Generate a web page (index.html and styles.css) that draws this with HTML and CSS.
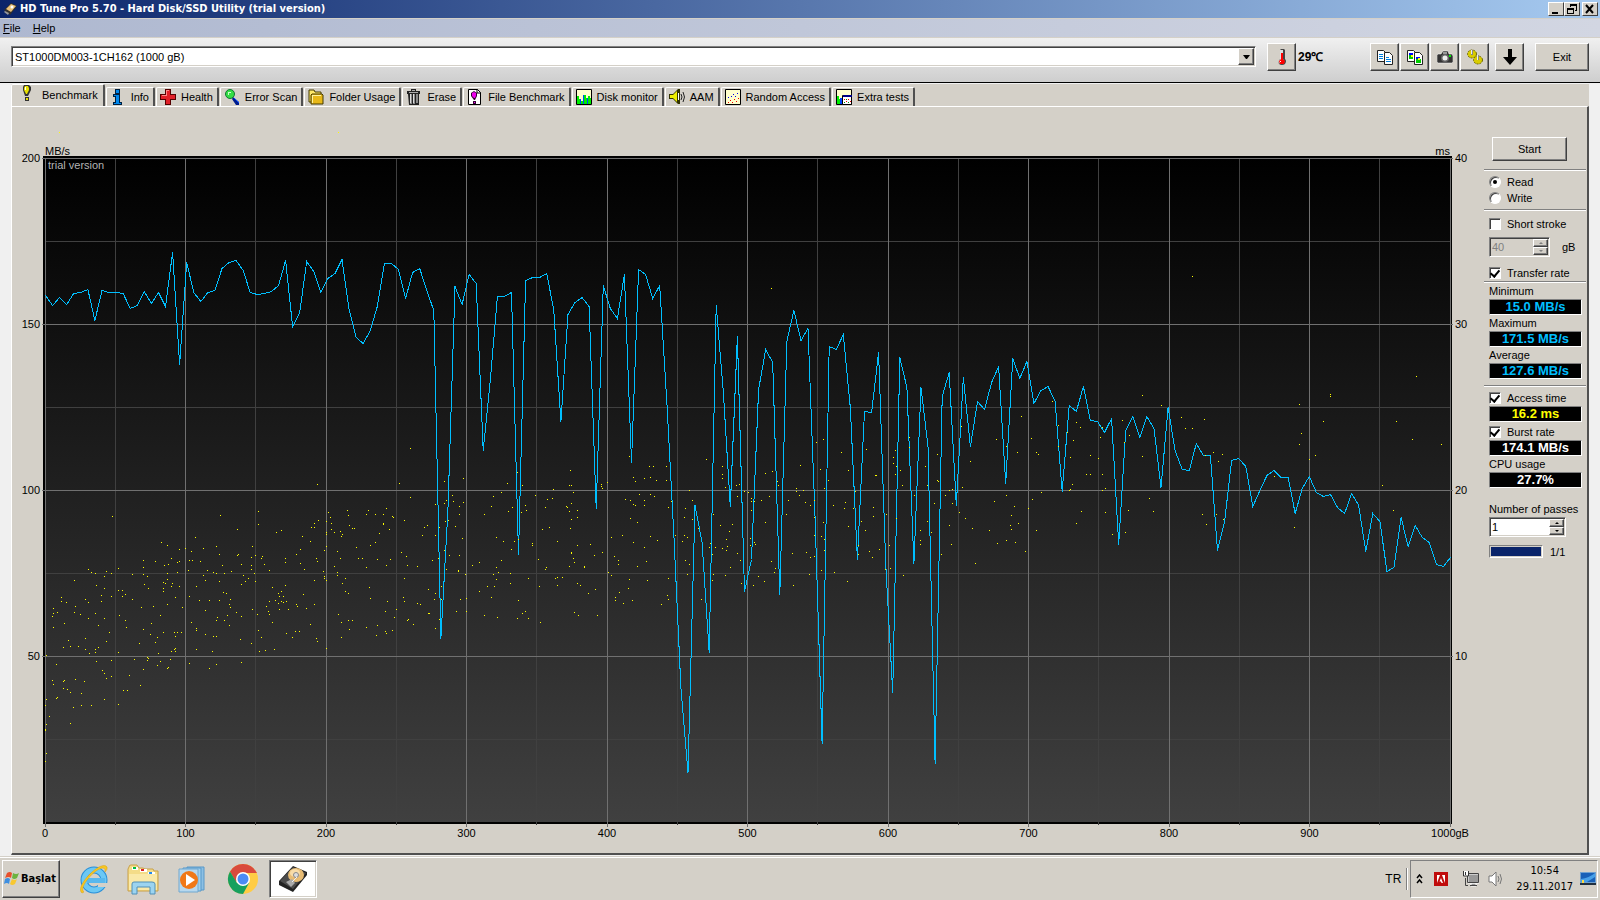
FILE: index.html
```
<!DOCTYPE html>
<html lang="en">
<head>
	<meta charset="UTF-8">
	<title>HD Tune Pro</title>
	<link rel="stylesheet" href="styles.css">
</head>
<body>
	<header class="titlebar">
		<svg class="icon" viewBox="0 0 16 16"><path d="M2 9 9 2l6 3-7 9z" fill="#33302c"/><path d="M4 8 9 3l5 2-5 6z" fill="#e8c078"/><circle cx="10" cy="6" r="1.5" fill="#fff"/><path d="m3 10 4 2-1 2-4-3z" fill="#999"/></svg>
		<h1 class="title">HD Tune Pro 5.70 - Hard Disk/SSD Utility (trial version)</h1>
		<button class="caption" aria-label="Minimize"><svg viewBox="0 0 12 10"><path d="M2 8h6v2H2z"/></svg></button>
		<button class="caption" aria-label="Restore"><svg viewBox="0 0 12 10"><path d="M4 0h7v7H9V6h1V2H5v1H4zM1 4h7v6H1zm1 2v3h5V6z" fill-rule="evenodd"/></svg></button>
		<button class="caption close" aria-label="Close"><svg viewBox="0 0 12 10"><path d="m2 1 7 8m0-8L2 9" stroke="#000" stroke-width="2"/></svg></button>
	</header>
	<nav class="menubar">
		<button><u>F</u>ile</button>
		<button><u>H</u>elp</button>
	</nav>

	<div class="toolbar">
		<div class="drive sunken">
			<select aria-label="Drive"><option>ST1000DM003-1CH162 (1000 gB)</option></select>
			<span class="arrow raised"><svg viewBox="0 0 7 4"><path d="M0 0h7L4 4H3z"/></svg></span>
		</div>
		<button class="tool raised" aria-label="Temperature"><svg viewBox="0 0 16 16"><path d="M7 0h3l1 1v9q2 2 0 5-3 2-6 0-1-3 1-5V1z" fill="#444"/><path d="M6 1h3v9q2 2 1 4-3 2-5 0-1-2 1-4z" fill="#ddd"/><path d="M7 4h2v6l2 2-1 3H6l-1-3 2-2z" fill="#f00"/><path d="M6 12h1v1H6z" fill="#fff"/></svg></button>
		<span class="temp">29℃</span>
		<button class="tool raised" aria-label="Copy text"><svg viewBox="0 0 16 16"><g stroke="#222" fill="#fff"><path d="M.5 1.5h6l2 2v9h-8z"/><path d="M7.5 3.5h5l3 3v9h-8z"/></g><path d="M2 5.5h4M2 7.5h4M2 9.500h4M9 8.500h3M9 10.500h5M9 12.500h5" stroke="#0080e0"/></svg></button>
		<button class="tool raised" aria-label="Copy screenshot"><svg viewBox="0 0 16 16"><g stroke="#222" fill="#fff"><path d="M.5 1.5h6l2 2v9h-8z"/><path d="M7.5 3.5h5l3 3v9h-8z"/></g><path d="M2 4h4v3H2zM9 8h4v2H9z" fill="#00f"/><path d="M2 6h4v4H2zM9 10h5v4H9z" fill="#0c0"/><path d="M4 6h2v2H4zM11 9h2v2h-2z" fill="#ff0"/></svg></button>
		<button class="tool raised" aria-label="Save screenshot"><svg viewBox="0 0 16 16"><path d="M1 5h3l2-3h5l1 3h3l1 2v6l-1 1H1l-1-1V6z" fill="#333" stroke="#fff" stroke-width=".5"/><path d="M6 3h4v2H6z" fill="#999"/><circle cx="8" cy="9" r="4" fill="#666"/><circle cx="8" cy="9" r="2.5" fill="#eee"/><path d="M12 6h2v2h-2z" fill="#0e0"/></svg></button>
		<button class="tool raised" aria-label="Options"><svg viewBox="0 0 16 16"><g fill="#d8cc00" stroke="#6b6500" stroke-dasharray="2 1"><ellipse cx="5" cy="5" rx="4.5" ry="4"/><ellipse cx="11" cy="11" rx="4.5" ry="4"/></g><path d="M4 1h2v5H4zM10 6h2v5h-2z" fill="#888"/><path d="M4 1h1v4H4zM10 6h1v5h-1z" fill="#eee"/></svg></button>
		<button class="tool raised down" aria-label="Hide to tray"><svg viewBox="0 0 16 16"><path d="M6 0h4v8h5l-7 8-7-8h5z"/></svg></button>
		<button class="exit raised">Exit</button>
	</div>

	<main class="content">
		<div class="tabs" role="tablist">
			<button class="tab active" role="tab"><svg viewBox="0 0 16 16"><path d="M5 0h5l2 2v3L9 11H6L4 5V2zM6 12h4v4H6z" fill="#333"/><path d="M6 1h3l1 2v2L8 9H7L5 5V3zM7 13h2v2H7z" fill="#e8e000"/><path d="M6 2h1v3H6z" fill="#fff"/></svg>Benchmark</button>
			<button class="tab" role="tab"><svg viewBox="0 0 16 16"><path d="M5 0h5v5H5zM3 5h7v8h2v3H3v-3h2V8H3z" fill="#002040"/><path d="M6 1h3v3H6zM4 6h5v8h2v1H4v-1h2V7H4z" fill="#08e"/></svg>Info</button>
			<button class="tab" role="tab"><svg viewBox="0 0 16 16"><path d="M5 0h6v5h5v6h-5v5H5v-5H0V5h5z" fill="#500"/><path d="M6 1h4v5h5v4h-5v5H6v-5H1V6h5z" fill="#e02028"/><path d="M6 1h3v1H7v5H2V6h4z" fill="#f88"/></svg>Health</button>
			<button class="tab" role="tab"><svg viewBox="0 0 16 16"><path d="m9 8 6 5v3h-3L8 10z" fill="#001c8c"/><path d="m10 9 5 5" stroke="#04f"/><circle cx="6" cy="5" r="4.5" fill="#3d4" stroke="#173"/><path d="M4 3h3v1H5v2H4z" fill="#cfc"/></svg>Error Scan</button>
			<button class="tab" role="tab"><svg viewBox="0 0 16 16"><path d="M1 1h5l1 2h6v10H1z" fill="#ffe868" stroke="#443a00"/><path d="M4 5h10l1 1v9H3V6z" fill="#e8b818" stroke="#443a00"/><path d="M4 6h9v1H5v7H4z" fill="#fff2a0"/></svg>Folder Usage</button>
			<button class="tab" role="tab"><svg viewBox="0 0 16 16"><path d="M5 0h5v2h4v3H1V2h4zM2 5h11v11H3z" fill="#222"/><path d="M3 3h9v1H3zM6 1h3v1H6z" fill="#aaa"/><path d="M4 5h2v10H4zM7 5h2v10H7zM10 5h2v9h-2z" fill="#888"/><path d="M4 5h1v9H4zM7 5h1v9H7z" fill="#ddd"/></svg>Erase</button>
			<button class="tab" role="tab"><svg viewBox="0 0 16 16"><path d="M1.5.5h9l3 3v12h-12z" fill="#fff" stroke="#000"/><path d="M10 0v4h4" fill="none" stroke="#000"/><path d="m7 2 3 2v3l-2 4H7L4 7V4zM6 12h3v3H6z" fill="#303"/><path d="m7 3 2 1v3l-1 2H7L5 7V4zM7 13h1v1H7z" fill="#e0e"/></svg>File Benchmark</button>
			<button class="tab" role="tab"><svg viewBox="0 0 16 16"><path d="M.5.5h15v15H.5z" fill="#ffc" stroke="#000"/><path d="M1 7h2v3h2v2h2V6h3v3h2V7h2v2h1v6H1z" fill="#0e0"/><path d="M4 10h1v5H4zM7 6h1v9H7zM11 9h1v6h-1z" fill="#04f"/></svg>Disk monitor</button>
			<button class="tab" role="tab"><svg viewBox="0 0 16 16"><path d="M0 5h4l5-5h2v15H9l-5-5H0z" fill="#333300"/><path d="M1 6h3l4-4v11L4 9H1z" fill="#ee0"/><path d="M9 4h1v7H9z" fill="#fff"/><path d="M12 5q2 3 0 6m2-8q3 5 0 10" fill="none" stroke="#222"/></svg>AAM</button>
			<button class="tab" role="tab"><svg viewBox="0 0 16 16"><path d="M.5.5h15v15H.5z" fill="#ffc" stroke="#000"/><path d="M3 13h1v1H3zM5 11h1v1H5zM7 13h1v1H7zM9 10h1v1H9zM11 12h1v1h-1zM13 9h1v1h-1z" fill="#e00"/><path d="M3 8h1v1H3zM6 7h1v1H6zM8 5h1v1H8zM10 7h1v1h-1zM12 4h1v1h-1z" fill="#00e"/></svg>Random Access</button>
			<button class="tab" role="tab"><svg viewBox="0 0 16 16"><path d="M.5.5h15v15H.5z" fill="#ffc" stroke="#000"/><path d="M1 7h2v3h2v5H1z" fill="#0e0"/><path d="M4 9h2v6H4z" fill="#04f"/><path d="M6.5 6.5h9v9h-9z" fill="#fff" stroke="#000"/><path d="M7 6h9v2H7z" fill="#008"/><path d="M8 10h1v1H8zM10 12h1v1h-1zM12 10h1v1h-1zM14 12h1v1h-1z" fill="#e00"/><path d="M8 13h1v1H8zM10 10h1v1h-1zM12 13h1v1h-1z" fill="#080"/></svg>Extra tests</button>
		</div>

		<section class="panel">
			<div class="units"><span>MB/s</span><span>ms</span></div>
			<div class="axis-y left"><span>200</span><span>150</span><span>100</span><span>50</span><span></span></div>
			<div class="chart">
				<svg id="graph" viewBox="-2 -2 1409 668" preserveAspectRatio="none" shape-rendering="crispEdges">
					<defs><linearGradient id="fade" x1="0" y1="0" x2="0" y2="1"><stop offset="0" stop-color="#000"/><stop offset="1" stop-color="#404040"/></linearGradient></defs>
					<rect x="-2" y="-2" width="1409" height="668"/>
					<rect x="0" y="0" width="1405" height="664" fill="url(#fade)"/>
					<g id="grid"></g>
					<polyline id="transfer"/>
					<g id="access"></g>
				</svg>
				<span class="trial">trial version</span>
			</div>
			<div class="axis-y right"><span>40</span><span>30</span><span>20</span><span>10</span><span></span></div>
			<div class="axis-x"><span>0</span><span>100</span><span>200</span><span>300</span><span>400</span><span>500</span><span>600</span><span>700</span><span>800</span><span>900</span><span>1000gB</span></div>

			<aside class="side">
				<button class="start raised">Start</button>
				<hr>
				<div class="modes">
					<label class="check"><input type="radio" name="mode" checked>Read</label>
					<label class="check"><input type="radio" name="mode">Write</label>
				</div>
				<hr>
				<div class="stroke">
					<label class="check"><input type="checkbox">Short stroke</label>
					<div class="unit-row">
						<span class="spin sunken off"><input type="number" value="40" aria-label="Short stroke size" disabled><span class="steps"><button class="raised" aria-label="More" disabled></button><button class="raised less" aria-label="Less" disabled></button></span></span>
						<span>gB</span>
					</div>
					<label class="check"><input type="checkbox" checked>Transfer rate</label>
				</div>
				<hr>
				<div class="readings">
					<p>Minimum</p><output>15.0 MB/s</output>
					<p>Maximum</p><output>171.5 MB/s</output>
					<p>Average</p><output>127.6 MB/s</output>
				</div>
				<hr>
				<div class="readings extra">
					<label class="check"><input type="checkbox" checked>Access time</label><output class="yellow">16.2 ms</output>
					<label class="check"><input type="checkbox" checked>Burst rate</label><output class="white">174.1 MB/s</output>
					<p>CPU usage</p><output class="white">27.7%</output>
				</div>
				<div class="passes">
					<label for="passes">Number of passes</label>
					<span class="spin sunken"><input type="number" id="passes" value="1"><span class="steps"><button class="raised" aria-label="More"></button><button class="raised less" aria-label="Less"></button></span></span>
					<div class="unit-row"><span class="progress"><i></i></span><span>1/1</span></div>
				</div>
			</aside>
		</section>
	</main>

	<footer class="taskbar">
		<button class="start-menu raised"><svg viewBox="0 0 16 16"><path d="M3 2q3-2 5 0L7 7Q5 5 1 7z" fill="#e8502c"/><path d="M9 2q3 2 6 0l-2 5q-3 2-5 0z" fill="#6cb33f"/><path d="M1 8q3-2 5 0l-1 5q-2-2-5 0z" fill="#3f8fe0"/><path d="M8 8q3 2 5 0l-2 5q-3 2-5 0z" fill="#f8c830"/></svg>Başlat</button>
		<div class="launch">
			<button aria-label="Internet Explorer"><svg viewBox="0 0 32 32"><circle cx="17" cy="17" r="10" fill="none" stroke="#2a8fd8" stroke-width="7"/><circle cx="17" cy="17" r="10" fill="none" stroke="#6cc8f4" stroke-width="5"/><path d="M10 15h18v5H10z" fill="#58b8ee"/><path d="M21 20h10v4H21z" fill="#d4d0c8"/><path d="M5 30C-3 24 24-4 30 4q1 2-2 5 1-4-2-4C18 5 1 25 7 29z" fill="#f8c820" stroke="#d89c10" stroke-width=".5"/></svg></button>
			<button aria-label="Explorer"><svg viewBox="0 0 32 32"><path d="M2 4q0-2 2-2h6l2 3h4l2 1h8l1 2h4v20H1V6z" fill="#f4dc88" stroke="#c8a048"/><path d="M5 4h6v3H5zM13 6h7v3h-7zM21 9h7v3h-7z" fill="#fff"/><path d="M6 4h3v2H6z" fill="#0b4"/><path d="M14 6h3v2h-3z" fill="#d22"/><path d="M22 9h3v2h-3z" fill="#28e"/><path d="M2 11h28v16H2z" fill="#fae9a8"/><path d="M5 31V21q0-2 2-2h18q3 0 3 2v10h-5v-7H10v7z" fill="#9cd4f0" stroke="#5090b8"/></svg></button>
			<button aria-label="Media Player"><svg viewBox="0 0 32 32"><path d="M10 4h17v23H10z" fill="#8cc0e4" stroke="#5898c8"/><path d="M6 5h18v23H6z" fill="#a0d0ee" stroke="#5898c8"/><path d="M2 6h19v23H2z" fill="#b8d8ee" stroke="#70a8d0"/><circle cx="12" cy="17" r="9" fill="#f07818"/><path d="m9 11 9 6-9 6z" fill="#fff"/></svg></button>
			<button aria-label="Chrome"><svg viewBox="0 0 32 32"><circle cx="16" cy="16" r="15" fill="#fc4"/><path d="M3 8.500A15 15 0 0 1 29 8.500L30 10H16l-7 9z" fill="#d94a3d"/><path d="M3 8.500A15 15 0 0 0 16 31l6-11-12 0z" fill="#17a05e"/><circle cx="16" cy="16" r="7" fill="#fff"/><circle cx="16" cy="16" r="5.5" fill="#4c8bf5"/></svg></button>
			<button class="running sunken" aria-label="HD Tune Pro"><svg viewBox="0 0 32 32"><path d="M2 18 16 3l14 6v3L16 29 2 22z" fill="#222"/><path d="M3 18 16 4l13 6-13 16z" fill="#4c4c4c"/><ellipse cx="19" cy="12" rx="8" ry="7" fill="#e8bc74"/><ellipse cx="18" cy="10" rx="5" ry="4" fill="#f8dca8"/><circle cx="19" cy="12" r="2.5" fill="#ddd" stroke="#888"/><path d="m9 19 6-3 3 4-4 4z" fill="#aaa"/><path d="m15 19 5-5" stroke="#eee"/></svg></button>
		</div>
		<span class="lang">TR</span>
		<div class="tray">
			<svg class="chevrons" viewBox="0 0 7 10"><path d="m1 4 2.500-3L6 4M1 9l2.500-3L6 9" fill="none" stroke="#000" stroke-width="1.5"/></svg>
			<svg class="adobe" viewBox="0 0 14 14"><path d="M0 0h14v14H0z" fill="#c00c0c"/><path d="M3 11V3h3zM11 11V3H8zM7 6l2 5H7.500L7 9.500H5.500z" fill="#fff"/></svg>
			<svg class="net" viewBox="0 0 16 16"><path d="M5 3h11v9H5zM8 12h5v3H8z" fill="#999" stroke="#fff"/><path d="M4.500 2.500h11v9h-11zM7 14.500h7M5 14.500H2.500V7" fill="none" stroke="#444"/><path d="M.5 0v5h5V0M2.500 1v3" fill="#fff" stroke="#333"/></svg>
			<svg class="speaker" viewBox="0 0 16 16"><path d="M1 5h3l4-4v14l-4-4H1z" fill="#fff" stroke="#777"/><path d="M10 5q2 3 0 6m2-8q3 5 0 10" fill="none" stroke="#777"/></svg>
			<div class="clock"><time>10:54</time><time>29.11.2017</time></div>
			<svg class="desktop" viewBox="0 0 16 13"><path d="M0 0h16v13H0z" fill="#6fa0d0"/><path d="M1 1h14v9H1z" fill="#1860b8"/><path d="M1 7q8-1 14-6v4L7 10H1z" fill="#48a0e8"/><path d="M0 11h16v2H0z" fill="#203040"/><path d="M2 8h2v3H2z" fill="#fd4"/></svg>
		</div>
	</footer>
	<script src="graph.js"></script>
</body>
</html>
```
FILE: styles.css
```
* {
	box-sizing: border-box;
}
body {
	display: flex;
	flex-direction: column;
	min-height: 100vh;
	margin: 0;
	background: #f0f0f0;
	color: #000;
	font-family: "Liberation Sans", Arial, sans-serif;
	font-size: 11px;
	line-height: 12px;
}
button, input, select {
	font: inherit;
	color: inherit;
	border: 0;
	padding: 0;
	margin: 0;
	background: none;
	border-radius: 0;
}
p {
	margin: 0;
}
.raised {
	background: #d4d0c8;
	border: 1px solid;
	border-color: #fff #404040 #404040 #fff;
	box-shadow: inset -1px -1px #808080;
}
.sunken {
	border: 1px solid;
	border-color: #808080 #fff #fff #808080;
	box-shadow: inset 1px 1px #404040, inset -1px -1px #d4d0c8;
}

/* title and menu */
.titlebar {
	display: flex;
	align-items: center;
	height: 18px;
	padding: 0 2px;
	background: linear-gradient(90deg, #0a246a, #a6caf0);
}
.titlebar .icon {
	width: 16px;
	height: 16px;
}
.title {
	flex: 1;
	margin: 0 0 0 2px;
	color: #fff;
	font: bold 11px/16px "DejaVu Sans Condensed", "Noto Sans", sans-serif;
}
.caption {
	width: 16px;
	height: 14px;
	background: #d4d0c8;
	border: 1px solid;
	border-color: #fff #404040 #404040 #fff;
}
.caption svg {
	display: block;
	width: 12px;
	height: 10px;
	margin: auto;
}
.caption.close {
	margin-left: 2px;
}
.menubar {
	display: flex;
	gap: 12px;
	height: 20px;
	padding: 0 3px;
	background: linear-gradient(90deg, #aeb8d0, #d2d6e2);
	border-top: 1px solid #d4d0c8;
	border-bottom: 1px solid #d4d0c8;
}

/* toolbar */
.toolbar {
	display: flex;
	align-items: flex-start;
	height: 45px;
	padding: 5px 11px 0;
	background: linear-gradient(#f0f0f0, #cecece);
	border-bottom: 1px solid #000;
}
.drive {
	position: relative;
	flex: 1;
	display: flex;
	height: 21px;
	margin: 3px 11px 0 0;
	padding: 2px;
	background: #fff;
}
.drive select {
	flex: 1;
	appearance: none;
	padding-left: 1px;
}
.drive .arrow {
	position: absolute;
	right: 1px;
	top: 1px;
	display: grid;
	place-items: center;
	width: 16px;
	height: 17px;
	pointer-events: none;
}
.arrow svg {
	width: 7px;
	height: 4px;
}
.tool {
	display: grid;
	place-items: center;
	width: 29px;
	height: 28px;
	margin-right: 1px;
}
.tool svg {
	width: 16px;
	height: 16px;
}
.temp {
	width: 73px;
	padding: 8px 0 0 1px;
	font-weight: bold;
	font-size: 12px;
}
.tool.down {
	margin: 0 11px 0 5px;
}
.exit {
	width: 54px;
	height: 28px;
}

/* tabs */
.content {
	flex: 1;
	display: flex;
	flex-direction: column;
	margin: 1px 11px;
	background: #d4d0c8;
}
.tabs {
	display: flex;
	align-items: flex-end;
	height: 22px;
}
.tab {
	display: flex;
	align-items: center;
	gap: 5px;
	height: 19px;
	margin-right: 1px;
	padding: 0 4px 0 3px;
	border-top: 1px solid #fff;
	border-left: 1px solid #fff;
	border-right: 2px solid #505050;
	border-radius: 2px 2px 0 0;
}
.tab svg {
	width: 16px;
	height: 16px;
}
.tab.active {
	gap: 7px;
	height: 22px;
	padding: 0 5px 0 7px;
	align-items: flex-start;
	line-height: 20px;
}

/* benchmark page */
.panel {
	flex: 1;
	display: grid;
	grid-template-columns: 31px 1fr 32px 102px;
	grid-template-rows: 49px 1fr 29px;
	padding-right: 1px;
	border: solid;
	border-width: 1px 2px 2px 1px;
	border-color: #fff #505050 #505050 #fff;
}
.units {
	grid-area: 1 / 2;
	display: flex;
	justify-content: space-between;
	align-items: flex-end;
	padding: 0 2px;
	line-height: 10px;
}
.chart {
	grid-area: 2 / 2;
	position: relative;
}
.chart svg {
	position: absolute;
	width: 100%;
	height: 100%;
	overflow: visible;
}
.trial {
	position: absolute;
	left: 5px;
	top: 3px;
	color: #b4b4b4;
}
.axis-y {
	display: flex;
	flex-direction: column;
	justify-content: space-between;
	margin: 2px 3px;
}
.axis-y span {
	display: flex;
	align-items: center;
	height: 0;
}
.axis-y.left {
	grid-area: 2 / 1;
	align-items: flex-end;
}
.axis-y.right {
	grid-area: 2 / 3;
}
.axis-x {
	grid-area: 3 / 2;
	display: flex;
	justify-content: space-between;
	margin: 3px 2px 0;
}
.axis-x span {
	display: flex;
	justify-content: center;
	width: 0;
}
.minor {
	stroke: #404040;
}
.major {
	stroke: #707070;
}
#transfer {
	fill: none;
	stroke: #00bfff;
}
#access {
	fill: #ff0;
}

/* right column */
.side {
	grid-area: 1 / 4 / 4 / 5;
	padding-top: 30px;
}
.side hr {
	height: 2px;
	margin: 0;
	border: 0;
	border-top: 1px solid #808080;
	border-bottom: 1px solid #fff;
}
.start {
	display: block;
	width: 75px;
	height: 24px;
	margin: 0 auto 8px 8px;
}
.check {
	display: flex;
	align-items: center;
	gap: 6px;
	height: 16px;
}
.check input {
	appearance: none;
	display: grid;
	place-items: center;
	width: 12px;
	height: 12px;
	background: #fff;
	border: 1px solid;
	border-color: #808080 #fff #fff #808080;
	box-shadow: inset 1px 1px #404040;
}
.check input[type=radio] {
	border-radius: 50%;
}
.check input[type=radio]:checked::after {
	content: "";
	width: 4px;
	height: 4px;
	border-radius: 50%;
	background: #000;
}
.check input[type=checkbox]:checked::after {
	content: "";
	width: 4px;
	height: 7px;
	margin-bottom: 2px;
	border: solid #000;
	border-width: 0 2px 2px 0;
	transform: rotate(40deg);
}
.modes {
	padding: 3px 5px;
}
.stroke {
	padding: 5px 5px 0;
}
.unit-row {
	display: flex;
	align-items: center;
	gap: 12px;
}
.stroke .unit-row {
	margin: 5px 0 8px;
}
.spin {
	display: flex;
	width: 61px;
	height: 20px;
	padding: 1px;
	background: #fff;
}
.spin input {
	flex: 1;
	width: 0;
	padding-left: 1px;
	appearance: textfield;
}
.spin input::-webkit-inner-spin-button {
	display: none;
}
.spin.off {
	background: #d4d0c8;
	color: #808080;
}
.steps {
	display: flex;
	flex-direction: column;
	width: 15px;
}
.steps button {
	flex: 1;
	display: grid;
	place-items: center;
}
.steps button::after {
	content: "";
	border: 2px solid transparent;
	border-top: 0;
	border-bottom: 2px solid #000;
}
.steps .less::after {
	border-top: 2px solid #000;
	border-bottom: 0;
}
.off .steps button::after {
	border-bottom-color: #808080;
	border-top-color: #808080;
}
.readings {
	padding: 2px 5px 4px;
}
.readings p {
	padding-bottom: 2px;
}
output {
	display: block;
	width: 93px;
	height: 16px;
	margin-bottom: 2px;
	background: #000;
	border: 1px solid;
	border-color: #808080 #fff #fff #808080;
	color: #00bfff;
	font-weight: bold;
	font-size: 13px;
	line-height: 14px;
	text-align: center;
}
.readings.extra {
	padding: 3px 5px 6px;
}
.yellow {
	color: #ff0;
}
.white {
	color: #fff;
}
.passes {
	display: flex;
	flex-direction: column;
	gap: 2px;
	padding: 7px 5px;
}
.passes .spin {
	width: 77px;
}
.passes .unit-row {
	gap: 7px;
	margin-top: 6px;
}
.progress {
	width: 54px;
	height: 13px;
	padding: 1px;
	border: 1px solid;
	border-color: #808080 #fff #fff #808080;
}
.progress i {
	display: block;
	height: 100%;
	background: #0a246a;
}

/* taskbar */
.taskbar {
	display: flex;
	align-items: center;
	height: 44px;
	padding: 0 2px;
	background: #d4d0c8;
	border-top: 1px solid #d4d0c8;
	box-shadow: inset 0 1px #fff;
}
.start-menu {
	display: flex;
	align-items: center;
	gap: 1px;
	width: 58px;
	height: 38px;
	padding-left: 1px;
	font: bold 11px/14px "DejaVu Sans Condensed", "Noto Sans", sans-serif;
}
.start-menu svg {
	width: 16px;
	height: 16px;
}
.launch {
	flex: 1;
	display: flex;
	align-items: center;
	gap: 2px;
	margin-left: 9px;
}
.launch button {
	display: grid;
	place-items: center;
	width: 48px;
	height: 38px;
}
.launch svg {
	width: 32px;
	height: 32px;
}
.launch .running {
	background: #fff;
}
.lang {
	margin-right: 3px;
	padding: 5px 5px 5px 0;
	border-right: 1px solid #808080;
	box-shadow: 1px 0 #fff;
	font-size: 12px;
}
.tray {
	display: flex;
	align-items: center;
	height: 38px;
	padding: 0 1px 0 5px;
	border: 1px solid;
	border-color: #808080 #fff #fff #808080;
	font: 11px/16px "DejaVu Sans Condensed", "Noto Sans", sans-serif;
}
.chevrons {
	width: 7px;
	height: 10px;
	margin-right: 11px;
}
.adobe {
	width: 14px;
	height: 14px;
	margin-right: 15px;
}
.net, .speaker {
	width: 16px;
	height: 16px;
	margin-right: 9px;
}
.clock {
	display: flex;
	flex-direction: column;
	align-items: center;
	margin: 0 7px 0 3px;
}
.desktop {
	width: 16px;
	height: 13px;
}
```
FILE: graph.js
```
const SVG = "http://www.w3.org/2000/svg";
const W = 1405;
const H = 664;

function add(parent, name, attrs) {
	const el = document.createElementNS(SVG, name);
	for (const key in attrs) el.setAttribute(key, attrs[key]);
	parent.appendChild(el);
}

// grid: minor lines first so the major ones stay on top
const grid = document.getElementById("grid");
const crop = n => Math.floor(n) + 0.5;
for (const odd of [1, 0]) {
	const cls = odd ? "minor" : "major";
	for (let i = odd; i <= 20; i += 2) {
		const x = crop(i * W / 20);
		add(grid, "line", { x1: x, x2: x, y1: 0, y2: odd ? 667 : 669, class: cls });
	}
	for (let i = odd; i < 8; i += 2) {
		const y = crop(i * H / 8);
		add(grid, "line", { x1: odd ? 0 : -3, x2: odd ? W : W + 3, y1: y, y2: y, class: cls });
	}
}

// transfer rate, distance from the 200 MB/s line
const transfer = [
	137,147,139,146,135,134,131,162,132,134,134,135,150,147,133,145,134,148,94,206,
	104,134,143,134,132,110,104,102,112,134,136,135,133,127,102,168,154,103,113,134,
	120,115,101,151,179,185,172,148,105,105,111,140,114,110,132,152,480,352,128,146,
	116,125,292,222,138,138,134,396,122,119,119,115,152,263,156,144,139,148,350,127,
	150,160,116,304,111,116,140,127,243,377,529,614,347,384,494,147,233,348,178,433,
	401,231,191,204,436,183,152,182,170,360,585,188,191,176,250,401,253,254,194,405,
	534,199,229,405,229,288,605,238,214,347,219,288,243,251,224,208,325,200,220,203,
	245,232,228,243,333,247,253,228,262,263,274,260,386,272,258,279,258,270,329,249,
	292,311,312,285,297,297,392,363,302,300,308,348,332,317,312,319,319,355,330,318,
	334,338,336,349,355,335,347,393,355,363,413,409,359,388,367,379,384,406,408,399
];
document.getElementById("transfer").setAttribute("points",
	transfer.map((y, i) => (i * W / 199 + 0.5).toFixed(1) + "," + (y + 0.5)).join(" "));

// access time samples, in blocks: origin, scale, then x,y pairs
const blocks = [
	{ x: -5, y: 72, kx: 3, ky: 3, at: [
		1111,655,832,763,1078,760,1213,754,1270,745,1111,802,1237,796,1240,814,1219,811,1214,820,1186,823,1258,829,1270,817,1360,799,1354,829,1333,853,
		217,859,541,856,655,844,655,883,592,898,709,907,724,901,466,922,364,937,382,946,418,958,436,955,454,964,490,955,529,949,538,973,592,976,637,949,
		634,982,646,976,667,979,664,985,673,1003,736,985,736,997,769,973,781,958,781,1000,787,919,811,934,814,892,823,880,823,892,835,871,859,874,865,847,
		871,862,874,880,874,898,883,907,859,907,859,913,859,949,853,961,901,904,907,913,904,919,922,841,925,856,928,886,937,895,943,895,949,952,979,853,
		985,841,1006,853,1030,853,1039,835,1057,859,1060,862,1030,880,1030,883,1018,910,1048,898,1006,937,991,946,1093,871,1162,886,1153,892,1147,916,1186,916,1198,892,
		1216,874,1225,871,1246,889,1267,925,1258,853,1258,976,1228,976,1213,961,1369,922,1318,997,1297,1006,1276,1033,1255,1021,1255,1024,1219,1018,1195,985,1177,991,
		829,985,832,994,793,1018,850,1024,853,1039,853,1045,859,1051,823,1051,892,964,901,985,883,1009,892,1027,892,1036,955,985,967,985,979,1012,1012,988,1051,988,1039,1006,
		1084,967,1099,979,1102,1006,1132,1009,1093,1045,907,1060,916,1045,916,1084,925,1090,988,1072,991,1105,1042,1114,1036,1144,1069,1138,1063,1162,1090,1102,1093,1114,
		1132,1120,1141,1123,1165,1078,1186,1090,1183,1108,1204,1069,1204,1108,1261,1108,1279,1105,1279,1144,1249,1144,1318,1084,1342,1069,1363,1069,1354,1102,1369,1012,1375,1027,
		1360,1033,1369,1048,1372,1162,1333,1156,1198,1168,1186,1195,1168,1150,1165,1150,1105,1168,1102,1171,1120,1183,1057,1201,1039,1210,1036,1204,1012,1186,1009,1216,979,1192,
		928,1198,937,1171,925,1171,904,1177,895,1153,904,1222,859,1255,829,1225,832,1234,811,1183,823,1123,799,1135,790,1093,769,1123,772,1129,736,1066,724,1084,730,1099,
		715,1090,718,1099,706,1111,724,1114,730,1117,739,1114,715,1120,718,1138,745,1138,697,1072,688,1114,679,1129,685,1144,688,1153,697,1177,652,1153,637,1138,655,1201,
		664,1222,634,1240,658,1264,676,1261,703,1258,739,1210,757,1222,766,1204,778,1204,688,1021,643,1030,646,1054,634,1006,634,1018,625,1045,616,1054,610,1036,604,1003,
		595,973,604,1063,574,1024,547,1006,553,1030,529,1030,520,1027,538,1054,502,1021,481,994,457,991,448,991,445,1021,490,1036,496,1051,469,1069,448,1099,478,1111,
		508,1111,538,1111,550,1087,559,1090,571,1108,568,1123,571,1132,589,1147,604,1159,562,1156,553,1171,532,1162,529,1171,568,1186,601,1228,529,1219,520,1219,496,1213,
		496,1141,454,1177,469,1195,469,1201,469,1258,517,1264,412,997,418,994,394,985,385,1003,373,1006,346,994,310,991,310,1012,310,1033,322,1039,313,1063,325,1075,
		382,1030,412,1027,382,1048,376,1060,370,1057,370,1075,370,1084,397,1060,394,1069,418,1069,406,1102,382,1123,427,1132,340,1129,304,1132,361,1156,334,1180,310,1198,
		370,1207,352,1222,331,1213,346,1237,403,1207,412,1207,424,1207,406,1219,406,1255,403,1258,406,1264,394,1264,355,1270,298,1240,235,1267,145,1018,154,1027,166,1030,
		199,1024,214,1030,235,1015,193,1039,277,1033,103,1051,169,1066,193,1075,235,1081,247,1081,256,1093,247,1099,277,1108,214,1099,184,1096,184,1114,136,1108,145,1117,
		64,1102,64,1114,79,1117,106,1129,103,1147,121,1153,145,1165,166,1150,193,1165,238,1156,256,1171,259,1192,208,1207,175,1186,199,1234,175,1252,166,1258,166,1267,
		148,1270,136,1258,136,1225,115,1249,91,1249,85,1231,70,1252,73,1180,40,1135,40,1150,37,1159,52,1147,40,1192,18,1276,283,1288,322,1282,325,1285,391,1288
	] },
	{ x: -5, y: 492, kx: 3, ky: 3, at: [
		214,31,169,34,187,61,193,70,199,85,214,79,268,76,301,106,250,121,262,121,235,163,193,148,154,166,124,166,124,130,100,172,91,127,82,118,70,115,70,94,73,91,
		106,88,133,94,49,43,37,91,40,103,52,142,49,145,18,148,16,166,28,199,18,223,16,238,16,241,91,220,18,310,16,334,310,58,322,31,352,46,361,34,382,55,385,52,
		448,40,508,55,529,43,604,37
	] },
	{ x: 435, y: 92, kx: 3, ky: 2.904, at: [
		874,111,679,608,448,599,508,628,520,628,559,628,559,669,529,669,511,660,493,663,460,660,466,672,382,675,367,692,364,680,364,686,271,640,268,683,274,683,280,704,
		220,695,217,721,202,724,166,712,127,683,112,646,82,678,64,704,40,715,34,744,13,768,97,747,85,759,136,741,139,756,124,762,196,747,259,744,262,747,274,736,268,759,
		292,756,292,776,274,782,271,808,208,805,187,811,232,846,157,852,157,857,103,846,70,846,49,834,94,869,115,840,64,901,49,921,55,936,40,942,49,956,22,977,43,977,
		34,1009,13,1061,52,1067,91,939,91,968,115,1017,145,953,178,977,175,898,199,921,196,927,226,953,232,951,247,951,232,974,268,918,283,907,274,878,274,881,280,895,
		292,857,331,855,343,887,367,878,313,918,313,921,292,968,301,974,325,997,346,985,283,1052,295,1061,352,1061,127,1055,136,1049,112,1070,145,1070,181,1081,
		394,834,427,828,403,889,415,901,415,913,385,936,394,945,448,956,445,982,418,994,406,1009,406,1017,430,1026,457,1017,502,959,499,904,472,918,460,849,493,863,
		511,831,532,843,472,791,451,779,460,738,466,741,451,727,436,724,493,727,493,741,478,709,511,709,523,715,565,747,574,730,586,828,613,828,622,834,607,846,613,776,
		616,750,637,727,628,698,637,782,655,808,616,901,628,913,622,942,565,953,562,1003,565,1014,544,1029,664,1014,688,863,691,852,706,863,697,884,700,942,697,959,
		700,768,721,799,757,797,748,817,739,840,742,860,739,872,727,866,772,881,781,901,751,921,736,945,784,968,727,628,727,651,727,663,736,689,769,683,778,680,793,701,
		805,704,772,715,814,721,814,730,823,730,814,756,811,837,823,849,826,855,811,857,844,727,868,715,856,649,877,643,892,672,895,683,856,791,874,904,886,924,883,936,
		835,948,853,962,820,974,940,974,937,881,919,768,925,727,949,692,949,701,958,712,970,698,961,625,976,733,991,741,1003,727,1003,776,1021,637,1009,559,1030,550,
		1045,669,1033,692,1060,741,1030,791,1003,828,1024,831,1033,840,1033,872,979,878,991,892,1003,889,1024,930,988,942,1063,936,1102,962,1084,588,1159,579,1105,640,
		1126,701,1096,733,1093,750,1120,750,1144,788,1105,802,1156,814,1135,857,1135,884,1168,875,1177,892,1198,869,1180,747,1180,773,1189,654,1186,654,1219,768,
		1228,857,1216,927,1231,924,1249,779,1270,945,1267,683,1240,602,1240,619,1246,582,1249,628,1246,651,1261,640,1288,544,1288,573,1303,712,1336,628,1342,683,
		1372,593,1372,669,1363,736,1342,788,1354,820,1321,843,1321,855
	] },
	{ x: 875, y: 182, kx: 2.904, ky: 3, at: [
		15,379,50,343,21,436,50,421,53,425,73,466,85,451,94,448,94,490,123,442,42,490,21,544,33,577,0,571,0,613,85,556,91,613,62,643,114,517,132,535,152,565,161,670,
		120,259,146,364,222,298,251,319,294,229,283,337,323,295,338,337,344,343,216,484,251,466,274,499,265,526,262,556,265,568,285,550,201,571,225,610,251,601,277,607,
		306,634,338,571,315,505,326,478,352,457,384,184,402,256,402,319,428,277,445,301,454,247,466,262,437,352,442,433,437,448,434,451,495,346,518,355,524,292,529,262,
		483,403,495,403,529,403,538,445,529,451,468,514,454,550,538,517,559,583,597,577,605,511,588,241,608,286,593,307,646,166,701,196,646,349,666,475,678,514,
		759,232,770,265,791,265,826,238,852,337,878,343,866,364,829,346,820,523,860,523,831,553,881,538,1029,409,1087,562,1102,193,1192,163,1192,169,1171,244,1107,280,
		1102,313,1148,346,1131,358,1383,244,1441,109,1430,298,1514,313,1343,436,1374,511
	] },
	{ x: 0, y: 0, kx: 1, ky: 1, at: [1147, 118, 14, -26, 293, -26] }
];
const access = document.getElementById("access");
for (const b of blocks) {
	for (let i = 0; i < b.at.length; i += 2) {
		add(access, "rect", {
			x: Math.floor(b.x + b.at[i] / b.kx),
			y: Math.floor(b.y + b.at[i + 1] / b.ky),
			width: 1,
			height: 1
		});
	}
}
```
